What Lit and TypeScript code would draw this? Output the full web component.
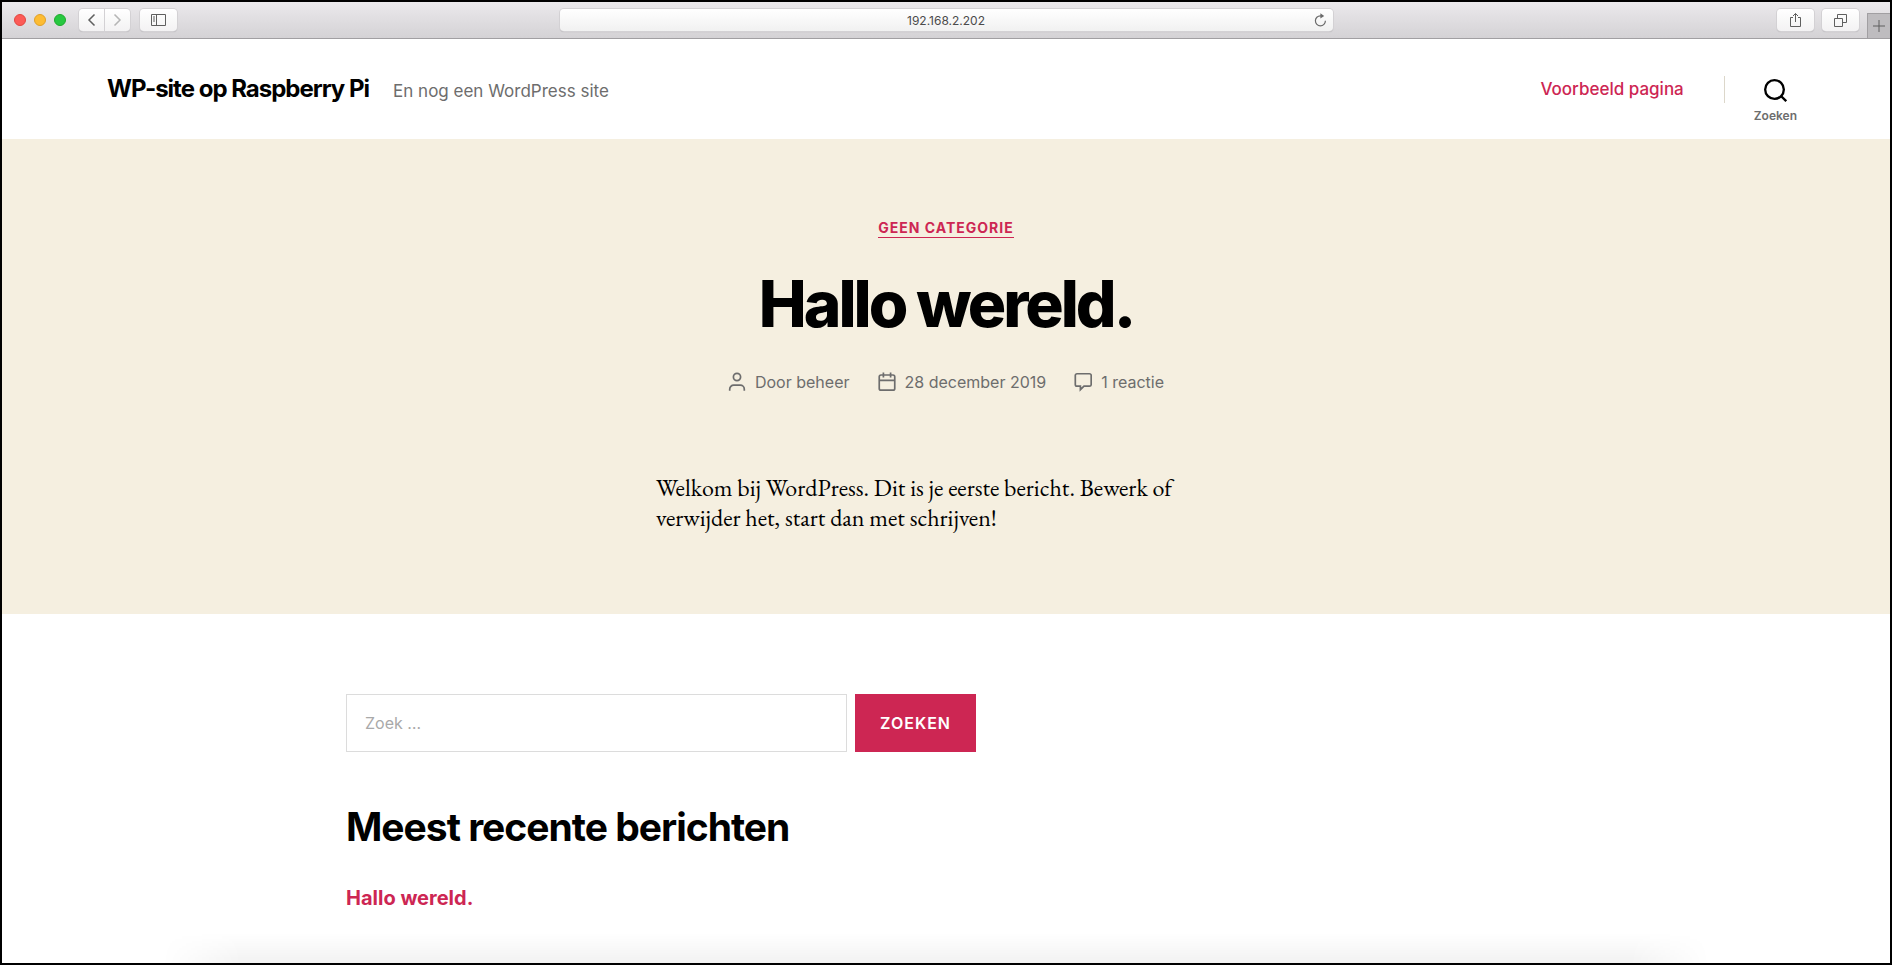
import { LitElement, html, css, svg } from "lit";
import { customElement } from "lit/decorators.js";

const icons = {
  back: svg`<svg width="9" height="14" viewBox="0 0 9 14"><path d="M7.500 1.500 2 7l5.500 5.500"/></svg>`,
  forward: svg`<svg width="9" height="14" viewBox="0 0 9 14"><path d="M1.500 1.500 7 7l-5.500 5.500"/></svg>`,
  sidebar: svg`<svg width="15" height="12" viewBox="0 0 15 12"><path d="M.5.5h14v11H.5zM5.500.5v11M2 3h2M2 5h2M2 7h2"/></svg>`,
  share: svg`<svg width="13" height="16" viewBox="0 0 13 16"><path d="M4 5.500H1.500v9h10v-9H9M6.500 10V1.500M4 4l2.500-2.500L9 4"/></svg>`,
  tabs: svg`<svg width="13" height="13" viewBox="0 0 13 13"><path d="M.5 4.500h8v8h-8zM3.500 4V.500h9v8H9"/></svg>`,
  plus: svg`<svg width="12" height="12" viewBox="0 0 12 12"><path d="M6 0v12M0 6h12"/></svg>`,
  reload: svg`<svg width="13" height="14" viewBox="0 0 13 14"><path d="M11.400 7.800a5 5 0 1 1-5-5h1" stroke-width="1.200"/><path d="M6.400.2 10.200 2.900 6.400 5.400z" fill="currentColor" stroke="none"/></svg>`,
  search: svg`<svg width="23" height="23" viewBox="0 0 23 23" stroke-width="2.334"><circle cx="10.504" cy="10.504" r="9.337"/><path d="m17 17 5.200 5.200"/></svg>`,
  person: svg`<svg width="18" height="20" viewBox="0 0 18 20" stroke-width="1.700"><circle cx="9" cy="5" r="3.600"/><path d="M1.700 18.800v-1.600a4 4 0 0 1 4-4h6.600a4 4 0 0 1 4 4v1.600"/></svg>`,
  calendar: svg`<svg width="18" height="20" viewBox="0 0 18 20" stroke-width="1.700"><rect x="1.250" y="3" width="15.500" height="15.200" rx="1.800"/><path d="M1.500 8.400h15M5.400.6v5M12.600.6v5"/></svg>`,
  comment: svg`<svg width="18" height="20" viewBox="0 0 18 20" stroke-width="1.700"><path d="M3 1.750h12.500a1.700 1.700 0 0 1 1.700 1.700v9a1.700 1.700 0 0 1-1.700 1.700H10l-3.600 3.500v-3.500H3a1.700 1.700 0 0 1-1.700-1.700v-9A1.700 1.700 0 0 1 3 1.750z"/></svg>`,
};

@customElement("browser-bar")
export class BrowserBar extends LitElement {
  static styles = css`
    :host { display: block; }
    .bar {
      display: grid; grid-template-columns: 1fr minmax(0, 773px) 1fr; align-items: center; height: 36px;
      background: linear-gradient(#ebe9ec, #d4d2d5);
      border-bottom: 1px solid #a19fa2;
    }
    .side { display: flex; align-items: center; height: 36px; }
    .left { padding-left: 12px; }
    .right { justify-content: flex-end; gap: 8px; }
    .lights { display: flex; gap: 8px; margin-right: 13px; }
    .light { width: 12px; height: 12px; border-radius: 50%; box-sizing: border-box; border: 1px solid #e2463f; background: #fc5b57; }
    .minimise { background: #fdbc33; border-color: #e0a028; }
    .zoom { background: #27c840; border-color: #1eaa2d; }
    button {
      font: inherit; padding: 0; border: 0; color: #5f5f5f;
      display: flex; align-items: center; justify-content: center;
      width: 37px; height: 22px; border-radius: 4px;
      background: linear-gradient(#fff, #f3f2f3);
      box-shadow: 0 0 0 1px #d3d1d4, 0 1px 1px #a8a6a9;
    }
    svg { display: block; fill: none; stroke: currentColor; }
    .pair { display: flex; gap: 1px; margin-right: 10px; }
    .pair button { width: 25px; }
    .pair svg { stroke-width: 1.5; }
    .pair button:first-child { border-radius: 4px 0 0 4px; }
    .pair button:last-child { border-radius: 0 4px 4px 0; color: #b5b5b5; }
    .address {
      display: flex; align-items: center; height: 22px;
      border-radius: 4px; background: linear-gradient(#fff, #f1f1f1);
      box-shadow: 0 0 0 1px #d3d1d4, 0 1px 1px #a8a6a9;
    }
    .address input {
      flex: 1; min-width: 0; border: 0; padding: 0 0 0 24px; background: none; outline: 0;
      font: 12px Inter, "Liberation Sans", sans-serif; color: #4b4b4b; text-align: center;
    }
    .address button { width: 24px; background: none; box-shadow: none; color: #6a6a6a; }
    .right .new-tab {
      align-self: flex-end; width: 23px; height: 25px; border-radius: 0; box-sizing: border-box;
      background: #bebcbf; border: 1px solid #a19fa2; border-width: 1px 0 0 1px; box-shadow: none;
    }
  `;
  render() {
    return html`<div class="bar">
      <div class="side left">
        <div class="lights"><span class="light"></span><span class="light minimise"></span><span class="light zoom"></span></div>
        <div class="pair">
          <button aria-label="Vorige">${icons.back}</button>
          <button aria-label="Volgende">${icons.forward}</button>
        </div>
        <button aria-label="Navigatiekolom">${icons.sidebar}</button>
      </div>
      <div class="address">
        <input aria-label="Adres" value="192.168.2.202" />
        <button aria-label="Herlaad">${icons.reload}</button>
      </div>
      <div class="side right">
        <button aria-label="Deel">${icons.share}</button>
        <button aria-label="Tabbladen">${icons.tabs}</button>
        <button class="new-tab" aria-label="Nieuw tabblad">${icons.plus}</button>
      </div>
    </div>`;
  }
}

@customElement("app-root")
export class AppRoot extends LitElement {
  static styles = css`
    :host {
      display: flex; flex-direction: column; box-sizing: border-box; min-height: 100vh;
      border: 2px solid #000; background: #fff; color: #000;
      font-family: Inter, "Liberation Sans", sans-serif; font-size: 17px;
    }
    a { color: #cd2653; text-decoration: none; }
    svg { display: block; fill: none; stroke: currentColor; }
    .header {
      display: flex; align-items: center; justify-content: space-between;
      height: 100px; padding: 0 93px 0 105px;
    }
    .titles { display: flex; align-items: baseline; gap: 24px; }
    .site { margin: 0; font-size: 24px; line-height: 30px; font-weight: 700; letter-spacing: -1px; }
    .site a { color: #000; }
    .tagline { margin: 0; color: #6d6d6d; }
    .nav { display: flex; align-items: center; font-weight: 500; }
    .divider { width: 1px; height: 27px; margin: 0 29px 0 40px; background: #dcd7ca; }
    .toggle {
      display: flex; flex-direction: column; align-items: center; gap: 7px;
      padding: 24px 0 0; border: 0; background: none; color: #000;
      font: 600 12px/14px Inter, "Liberation Sans", sans-serif;
    }
    .toggle span { color: #6d6d6d; }
    .post {
      display: flex; flex-direction: column; align-items: center;
      padding: 80px 20px; background: #f5efe0;
    }
    .category {
      font-size: 14px; line-height: 18px; font-weight: 700; text-transform: uppercase; letter-spacing: 1px;
      border-bottom: 1px solid currentColor;
    }
    .post h1 { margin: 30px 0 32px; font-size: 64px; line-height: 72px; font-weight: 800; letter-spacing: -3px; }
    .meta { display: flex; gap: 28px; margin: 0; padding: 0; list-style: none; font-size: 16px; line-height: 20px; color: #6d6d6d; }
    .meta li { display: flex; align-items: center; gap: 9px; }
    .meta a { color: inherit; }
    .content { width: 100%; max-width: 580px; margin: 81px 0 1px; font: 24px/30px "EB Garamond", "Liberation Serif", serif; }
    .footer { flex: 1; position: relative; padding: 80px 20px 40px; }
    .widgets { width: 100%; max-width: 1200px; margin: 0 auto; }
    .search { display: flex; gap: 8px; max-width: 630px; }
    .search input {
      flex: 1; min-width: 0; box-sizing: border-box; height: 58px; padding: 0 18px; border: 1px solid #dcdcdc; border-radius: 0;
      font: 16px Inter, "Liberation Sans", sans-serif;
    }
    .search input::placeholder { color: #a9a9a9; opacity: 1; }
    .search button {
      width: 121px; padding: 0; border: 0; background: #cd2653; color: #fff; text-transform: uppercase;
      font: 600 16px Inter, "Liberation Sans", sans-serif; letter-spacing: 1px;
    }
    h2 { margin: 51px 0 33px; font-size: 39px; line-height: 48px; font-weight: 700; letter-spacing: -1px; }
    .recent { margin: 0; padding: 0; list-style: none; font-size: 20px; line-height: 28px; font-weight: 700; }
    .shade {
      position: absolute; left: 160px; right: 180px; bottom: 0; height: 30px;
      background: linear-gradient(transparent, #0000000d);
      mask-image: linear-gradient(90deg, transparent, #000 80px, #000 calc(100% - 80px), transparent);
    }
  `;
  render() {
    return html`
      <browser-bar></browser-bar>
      <header class="header">
        <div class="titles">
          <p class="site"><a href="#">WP-site op Raspberry Pi</a></p>
          <p class="tagline">En nog een WordPress site</p>
        </div>
        <nav class="nav">
          <a href="#">Voorbeeld pagina</a>
          <span class="divider"></span>
          <button class="toggle">${icons.search}<span>Zoeken</span></button>
        </nav>
      </header>
      <article class="post">
        <a class="category" href="#">Geen categorie</a>
        <h1>Hallo wereld.</h1>
        <ul class="meta">
          <li>${icons.person}<span>Door <a href="#">beheer</a></span></li>
          <li>${icons.calendar}<a href="#">28 december 2019</a></li>
          <li>${icons.comment}<a href="#">1 reactie</a></li>
        </ul>
        <p class="content">Welkom bij WordPress. Dit is je eerste bericht. Bewerk of verwijder het, start dan met schrijven!</p>
      </article>
      <footer class="footer">
        <div class="widgets">
          <form class="search">
            <input type="search" aria-label="Zoeken naar" placeholder="Zoek …" />
            <button type="button">Zoeken</button>
          </form>
          <h2>Meest recente berichten</h2>
          <ul class="recent"><li><a href="#">Hallo wereld.</a></li></ul>
        </div>
        <div class="shade"></div>
      </footer>
    `;
  }
}
